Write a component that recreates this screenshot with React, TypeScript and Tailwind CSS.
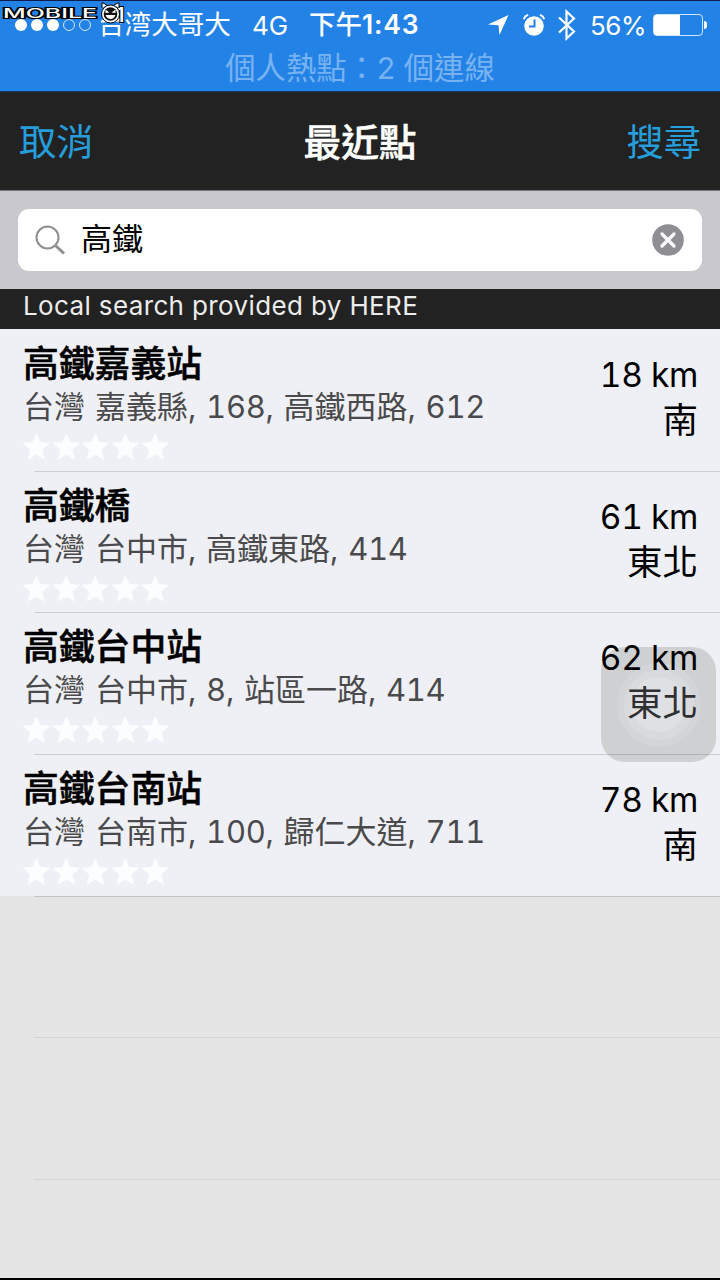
import type { ReactNode } from "react";

const places = [
  { name: "高鐵嘉義站", address: "台灣 嘉義縣, 168, 高鐵西路, 612", distance: "18 km", direction: "南" },
  { name: "高鐵橋", address: "台灣 台中市, 高鐵東路, 414", distance: "61 km", direction: "東北" },
  { name: "高鐵台中站", address: "台灣 台中市, 8, 站區一路, 414", distance: "62 km", direction: "東北" },
  { name: "高鐵台南站", address: "台灣 台南市, 100, 歸仁大道, 711", distance: "78 km", direction: "南" },
];

// digits and punctuation get their own spacing between the Chinese runs
function spaced(text: string): ReactNode[] {
  return text.split(/([\d, ]+)/).map((part, i) =>
    i % 2 ? (
      <span key={i} className="tracking-[-0.300px] [word-spacing:2px]">
        {part}
      </span>
    ) : (
      part
    ),
  );
}

function Watermark() {
  return (
    <svg className="absolute top-0 left-0" width="128" height="26" viewBox="0 0 128 26">
      <g fill="#fff" stroke="#000" strokeWidth="2.200" paintOrder="stroke" fontFamily="Inter, sans-serif">
        <text x="3" y="16.500" fontSize="12.500" fontWeight="500" textLength="94" lengthAdjust="spacingAndGlyphs">MOBILE</text>
        <text x="116" y="21" fontSize="20" fontWeight="600">1</text>
      </g>
      <path d="M102 7V1.500l5 2.500M119 7V1.500l-5 2.500" fill="#fff" stroke="#000" />
      <circle cx="110.500" cy="13" r="9" fill="#fff" stroke="#000" />
      <circle cx="110.500" cy="13" r="6.800" fill="#111" />
      <path d="M105.500 8.500l4 3-4 .5zM115.500 8.500l-4 3 4 .5zM105.500 14h10q-1.500 4-5 4t-5-4z" fill="#fff" />
    </svg>
  );
}

function AlarmIcon() {
  return (
    <svg width="22" height="22" viewBox="0 0 22 22">
      <circle cx="11" cy="12" r="9.800" fill="#fff" />
      <path d="M.8 5.200Q1.800 1.800 5.200.9M16.800.9Q20.200 1.800 21.200 5.200" stroke="#fff" strokeWidth="2" fill="none" />
      <path d="M11.500 5.500v7H6" stroke="#2382e6" strokeWidth="2" fill="none" />
    </svg>
  );
}

function StatusBar() {
  return (
    <header className="relative h-[92px] border-t border-b border-t-[#101c4e] border-b-[#12366a] bg-[#2382e6] text-white">
      <div className="flex h-[48px] items-center pl-[15px]">
        <div className="flex w-[83px] gap-[4px]">
          {[1, 2, 3, 4, 5].map((n) => (
            <span
              key={n}
              className={n < 4 ? "size-[12px] rounded-full bg-white" : "size-[12px] rounded-full border border-white/80"}
            />
          ))}
        </div>
        <span className="w-[154px] text-[26.600px]">台湾大哥大</span>
        <span className="w-[57px] text-[26px]">4G</span>
        <span className="w-[179px] text-[26.500px] font-medium">
          下午<span className="font-semibold tracking-[0.800px]">1:43</span>
        </span>
        <svg className="mr-[14px]" width="21" height="22" viewBox="0 0 21 22">
          <path d="M20.500 1L0 10.500l10.500.8 1 9.700z" fill="#fff" />
        </svg>
        <AlarmIcon />
        <svg className="ml-[12px]" width="20" height="32" viewBox="0 0 20 32">
          <path d="M2 8.500l15 14-7.500 7V2.500l7.500 7-15 14" fill="none" stroke="#fff" strokeWidth="2.200" />
        </svg>
        <span className="ml-[13px] w-[63px] text-[26px] tracking-[-0.500px]">56%</span>
        <div className="h-[22px] w-[50px] shrink-0 rounded-[4px] border border-white/80">
          <div className="h-full w-[26px] rounded-l-[2px] bg-white" />
        </div>
        <div className="ml-px h-[8px] w-[3px] rounded-r-full bg-white" />
      </div>
      <p className="text-center text-[30.300px] leading-[38px] text-[#78b2f1]">個人熱點：2 個連線</p>
      <Watermark />
    </header>
  );
}

function Stars() {
  return (
    <div className="flex h-[32px] items-center">
      {[1, 2, 3, 4, 5].map((n) => (
        <svg key={n} className="w-[29.700px]" height="28" viewBox="0 0 30 28">
          <path d="M13.500 0l4 9 10 .8-7.800 7 2.600 10-8.800-5-8.800 5 2.600-10-7.800-7 10-.8z" fill="#fcfdff" />
        </svg>
      ))}
    </div>
  );
}

export default function App() {
  return (
    <div className="relative flex h-[1280px] w-[720px] flex-col overflow-hidden bg-[#e5e5e5] font-['Inter','Noto_Sans_CJK_TC',sans-serif] whitespace-nowrap">
      <StatusBar />

      <nav className="flex h-[99px] items-center justify-between border-b border-[#77777b] bg-[#222] px-[19px] pt-[3px] text-[37.300px] text-[#259edb]">
        <button className="w-[110px] text-left">取消</button>
        <h1 className="text-[37.700px] font-medium text-white [-webkit-text-stroke:0.500px]">最近點</h1>
        <button className="w-[110px] text-right">搜尋</button>
      </nav>

      <div className="h-[98px] bg-[#c9c8ce] px-[18px] pt-[18px]">
        <div className="flex h-[62px] items-center rounded-[11px] bg-white pr-[18px] pl-[17px]">
          <svg width="31" height="31" viewBox="0 0 31 31" fill="none" stroke="#8e8e93">
            <circle cx="12.500" cy="12.500" r="11" strokeWidth="2" />
            <path d="M20.500 20.500l8.500 8" strokeWidth="3" />
          </svg>
          <span className="-mt-px ml-[15px] flex-1 text-[31px]">高鐵</span>
          <svg className="-mt-px" width="32" height="32" viewBox="0 0 32 32">
            <circle cx="16" cy="16" r="15.800" fill="#8e8e93" />
            <path d="M10 10l12 12M22 10L10 22" stroke="#fff" strokeWidth="3.200" strokeLinecap="round" />
          </svg>
        </div>
      </div>

      <p className="h-[40px] bg-[#222] pl-[23px] text-[26px] leading-[34px] tracking-[0.370px] text-[#ececec]">
        Local search provided by HERE
      </p>

      <ul className="bg-[#eff0f5]">
        {places.map((place, i) => (
          <li
            key={place.name}
            className="flex h-[141.700px] justify-between pr-[22px] pl-[23px] pt-[15px] text-black"
          >
            <div>
              <h2 className="h-[42px] text-[35.800px] leading-[40px] font-medium [-webkit-text-stroke:0.500px]">{place.name}</h2>
              <p className="h-[45px] text-[31px] leading-[42px] text-[#4a4a4c] tabular-nums">{spaced(place.address)}</p>
              <Stars />
            </div>
            <div className="relative z-10 pt-[8px] text-right text-[35.500px]">
              <p className="text-[33.500px] leading-[46px] tracking-[-0.400px] tabular-nums">{place.distance}</p>
              <p className={i === 2 ? "leading-[46px] text-[#303032]" : "leading-[46px]"}>{place.direction}</p>
            </div>
          </li>
        ))}
      </ul>

      {/* AssistiveTouch */}
      <div className="absolute top-[647px] left-[601px] flex size-[115px] items-center justify-center rounded-[24px] bg-[#cfd0d2]">
        <div className="flex size-[84px] items-center justify-center rounded-full bg-[#d4d5d8]">
          <div className="flex size-[70px] items-center justify-center rounded-full bg-[#d9dadd]">
            <div className="size-[55px] rounded-full bg-[#dfe0e3]" />
          </div>
        </div>
      </div>

      {/* row separators run on through the empty part of the table */}
      <div className="pointer-events-none absolute top-[330px] right-0 left-[34px]">
        {[1, 2, 3, 4, 5, 6].map((n) => (
          <div key={n} className={n < 5 ? "h-[141.700px] border-b border-black/14" : "h-[141.700px] border-b border-black/7"} />
        ))}
      </div>

      <div className="absolute inset-x-0 bottom-0 h-[2px] bg-black" />
    </div>
  );
}
